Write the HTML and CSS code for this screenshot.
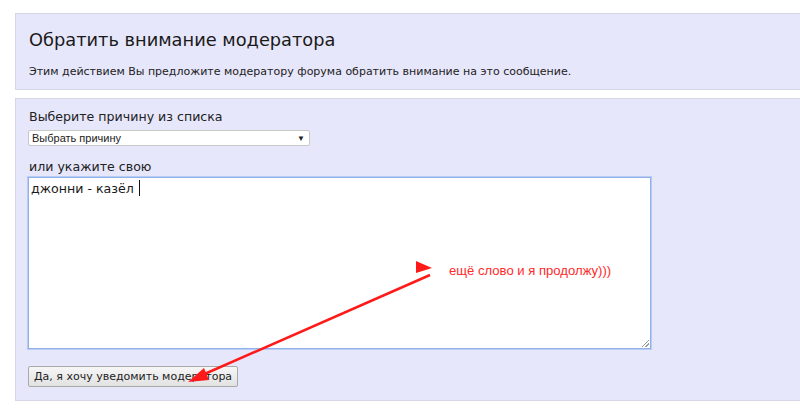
FILE: index.html
```html
<!DOCTYPE html>
<html lang="ru">
<head>
<meta charset="utf-8">
<link rel="stylesheet" href="styles.css">
</head>
<body>
<div class="page">
  <div class="panel head">
    <h2 class="title">Обратить внимание модератора</h2>
    <p class="desc">Этим действием Вы предложите модератору форума обратить внимание на это сообщение.</p>
  </div>
  <div class="panel form">
    <label class="lbl">Выберите причину из списка</label>
    <div class="select"><span>Выбрать причину</span><span class="caret">▼</span></div>
    <label class="lbl lbl2">или укажите свою</label>
    <div class="textarea"><span class="typed">джонни - казёл</span><span class="cursor"></span><span class="grip"></span></div>
    <button class="btn">Да, я хочу уведомить модератора</button>
  </div>
  <svg class="overlay" width="800" height="414" viewBox="0 0 800 414">
    <polygon points="416,261 432,268 416,273" fill="#ff1a1a"/>
    <line x1="430" y1="275" x2="200" y2="376" stroke="#ff1a1a" stroke-width="2.5"/>
    <polygon points="188,382 204,368 209,380" fill="#ff1a1a"/>
  </svg>
  <div class="note">ещё слово и я продолжу)))</div>
</div>
</body>
</html>
```
FILE: styles.css
```css
html, body {
  margin: 0;
  padding: 0;
  background: #ffffff;
}
.page {
  position: relative;
  width: 800px;
  height: 414px;
  padding-top: 13px;
  box-sizing: border-box;
  font-family: "DejaVu Sans", Verdana, sans-serif;
  color: #222;
  overflow: hidden;
}
.panel {
  margin-left: 15px;
  background: #e7e7fb;
  border: 1px solid #d5d5e5;
  border-right: none;
  box-sizing: border-box;
}
.head {
  height: 77px;
  padding: 15px 0 0 13px;
}
.title {
  margin: 0;
  font-weight: normal;
  font-size: 17.8px;
  line-height: 22px;
  color: #1a1a1a;
}
.desc {
  margin: 14px 0 0;
  font-size: 11px;
  line-height: 14px;
}
.form {
  margin-top: 8px;
  height: 303px;
  padding: 10px 0 0 13px;
  display: flex;
  flex-direction: column;
  align-items: flex-start;
}
.lbl {
  font-size: 12.6px;
  line-height: 16px;
}
.lbl2 {
  margin-top: 13px;
}
.select {
  margin-top: 5px;
  margin-left: -1px;
  width: 282px;
  height: 16px;
  box-sizing: border-box;
  background: #fff;
  border: 1px solid #c8c8c8;
  border-radius: 2px;
  display: flex;
  justify-content: space-between;
  align-items: center;
  padding: 0 4px 0 3px;
  font-family: "Liberation Sans", Arial, sans-serif;
  font-size: 11px;
}
.caret {
  font-size: 8px;
}
.textarea {
  position: relative;
  margin-top: 2px;
  margin-left: -1px;
  width: 623px;
  height: 172px;
  box-sizing: border-box;
  background: #fff;
  border: 1px solid #8fb0ea;
  box-shadow: 0 0 0 1px #b9cdf3;
  padding: 2px 2px;
  font-size: 12.6px;
  line-height: 17px;
  color: #1a1a1a;
}
.cursor {
  display: inline-block;
  width: 1px;
  height: 16px;
  background: #111;
  margin-left: 5px;
  vertical-align: -3px;
}
.grip {
  position: absolute;
  right: 1px;
  bottom: 1px;
  width: 7px;
  height: 7px;
  background: linear-gradient(135deg, transparent 45%, #999 45%, #999 55%, transparent 55%, transparent 70%, #999 70%, #999 80%, transparent 80%);
}
.btn {
  margin-top: 17px;
  margin-left: -1px;
  height: 21px;
  padding: 0 5px;
  font-family: "DejaVu Sans", Verdana, sans-serif;
  font-size: 11px;
  color: #222;
  background: linear-gradient(#f6f6f6, #e2e2e2);
  border: 1px solid #a9a9a9;
  border-radius: 2px;
}
.overlay {
  position: absolute;
  left: 0;
  top: 0;
  pointer-events: none;
}
.note {
  position: absolute;
  left: 449px;
  top: 263px;
  font-family: "Liberation Sans", Arial, sans-serif;
  font-size: 13.1px;
  color: #ff2a2a;
}
```
